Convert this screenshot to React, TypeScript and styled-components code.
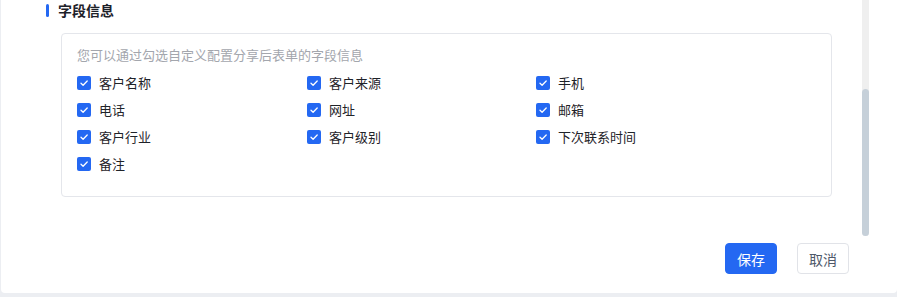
import React from "react";
import styled, { createGlobalStyle } from "styled-components";

const Global = createGlobalStyle`
  html, body { margin: 0; padding: 0; background: #eceef2; }
  body { font-family: "Noto Sans CJK SC", "Noto Sans", sans-serif; overflow: hidden; }
  * { box-sizing: border-box; }
`;

const Page = styled.div`
  width: 897px;
  height: 297px;
  padding: 0 0 4px 1px;
`;

const Panel = styled.div`
  position: relative;
  height: 293px;
  background: #fff;
  border-radius: 0 0 4px 4px;
  padding: 0 0 0 45px;
  display: flex;
  flex-direction: column;
`;

const Title = styled.div`
  display: flex;
  align-items: center;
  height: 20px;
  gap: 9px;
  font-size: 14px;
  font-weight: 700;
  color: #1d2129;
  line-height: 20px;
`;

const TitleBar = styled.span`
  width: 3px;
  height: 13px;
  border-radius: 2px;
  background: #2468f2;
`;

const Box = styled.div`
  margin: 13px 0 0 15px;
  width: 771px;
  height: 164px;
  border: 1px solid #e4e6eb;
  border-radius: 4px;
  padding: 11px 15px 0;
`;

const Hint = styled.div`
  font-size: 13px;
  line-height: 20px;
  color: #a3a6ad;
  margin-bottom: 4px;
`;

const Grid = styled.div`
  display: grid;
  grid-template-columns: 230px 229px 229px;
  grid-auto-rows: 27px;
`;

const Item = styled.label`
  display: flex;
  align-items: center;
  gap: 8px;
  font-size: 13px;
  color: #1f2329;
`;

const Check = styled.span`
  width: 14px;
  height: 14px;
  border-radius: 2px;
  background: #2468f2;
  display: flex;
  align-items: center;
  justify-content: center;
`;

const Footer = styled.div`
  display: flex;
  justify-content: flex-end;
  gap: 20px;
  margin-top: 46px;
  padding-right: 48px;
`;

const Button = styled.button<{ $primary?: boolean }>`
  width: 52px;
  height: 31px;
  border-radius: 4px;
  font-family: inherit;
  font-size: 14px;
  padding: 0;
  cursor: pointer;
  border: 1px solid ${(p) => (p.$primary ? "#2468f2" : "#e1e3e8")};
  background: ${(p) => (p.$primary ? "#2468f2" : "#fff")};
  color: ${(p) => (p.$primary ? "#fff" : "#4e5969")};
`;

const ScrollTrack = styled.div`
  position: absolute;
  left: 861px;
  top: 0;
  width: 7px;
  height: 236px;
  background: #efefef;
  border-radius: 0 0 4px 4px;
`;

const ScrollThumb = styled.div`
  position: absolute;
  left: 0;
  bottom: 0;
  width: 7px;
  height: 147px;
  background: #c6d0d9;
  border-radius: 4px;
`;

const fields = [
  "客户名称", "客户来源", "手机",
  "电话", "网址", "邮箱",
  "客户行业", "客户级别", "下次联系时间",
  "备注",
];

const CheckIcon = () => (
  <svg width="10" height="10" viewBox="0 0 10 10">
    <path d="M2 5.2 L4.1 7.2 L8.2 3" fill="none" stroke="#fff" strokeWidth="1.3" strokeLinecap="round" strokeLinejoin="round" />
  </svg>
);

export default function App() {
  return (
    <Page>
      <Global />
      <Panel>
        <Title>
          <TitleBar />
          字段信息
        </Title>
        <Box>
          <Hint>您可以通过勾选自定义配置分享后表单的字段信息</Hint>
          <Grid>
            {fields.map((f) => (
              <Item key={f}>
                <Check>
                  <CheckIcon />
                </Check>
                {f}
              </Item>
            ))}
          </Grid>
        </Box>
        <Footer>
          <Button $primary>保存</Button>
          <Button>取消</Button>
        </Footer>
        <ScrollTrack>
          <ScrollThumb />
        </ScrollTrack>
      </Panel>
    </Page>
  );
}
